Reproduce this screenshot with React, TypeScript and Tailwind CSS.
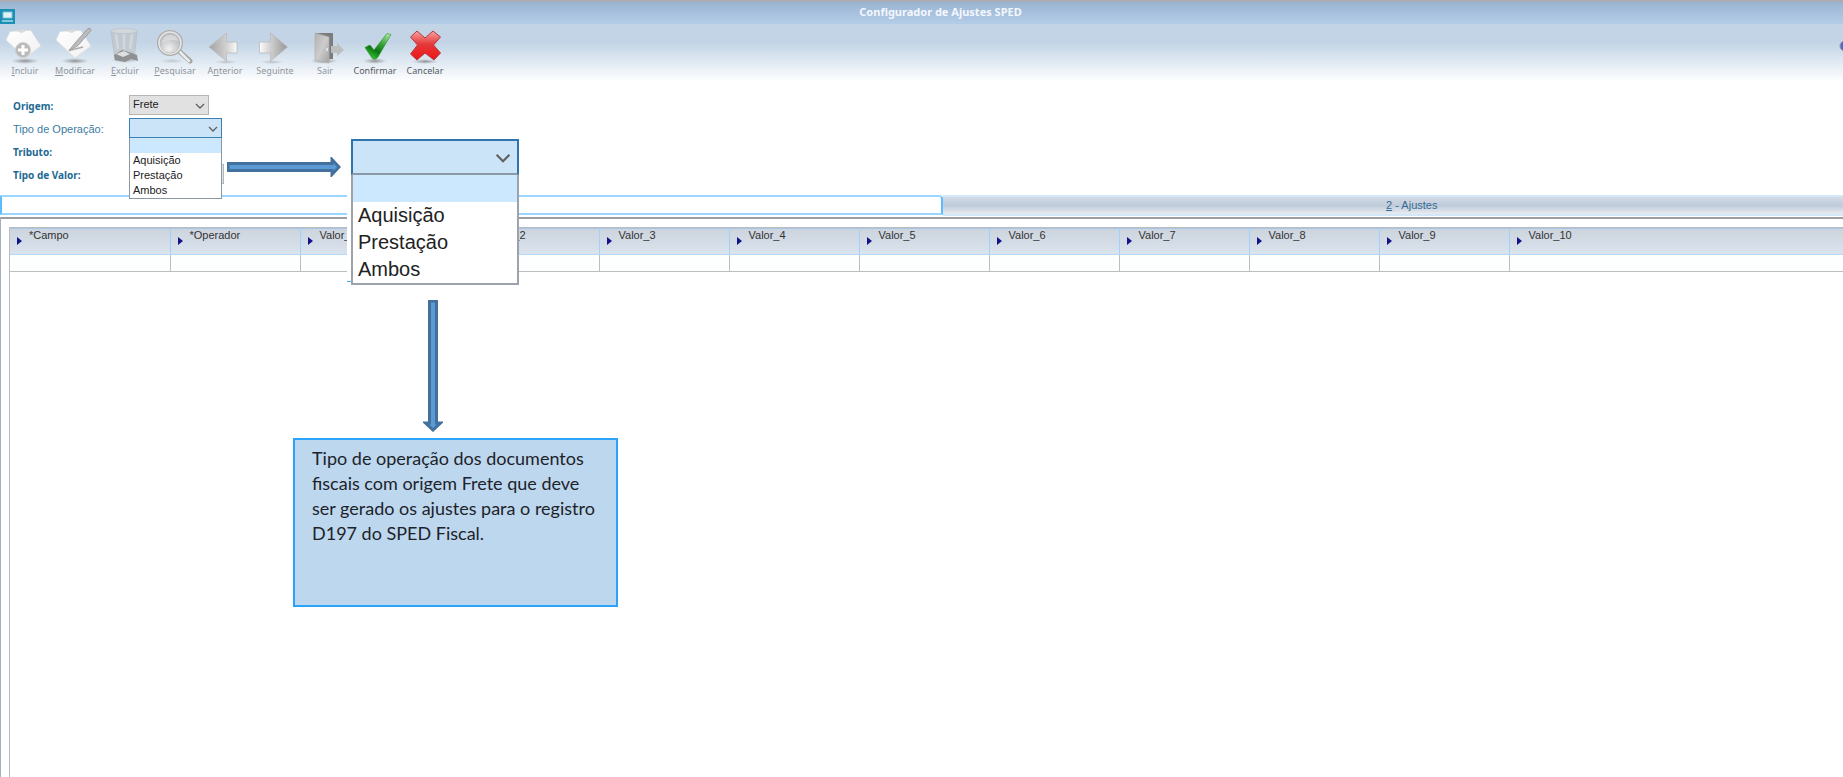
import type { ReactNode } from 'react'
import { clsx } from 'clsx'

const toolbar = [
  { name: 'Incluir', key: 0, enabled: false, icon: <AddIcon /> },
  { name: 'Modificar', key: 0, enabled: false, icon: <EditIcon /> },
  { name: 'Excluir', key: 0, enabled: false, icon: <TrashIcon /> },
  { name: 'Pesquisar', key: 0, enabled: false, icon: <SearchIcon /> },
  { name: 'Anterior', key: 1, enabled: false, icon: <PreviousIcon /> },
  { name: 'Seguinte', key: 2, enabled: false, icon: <NextIcon /> },
  { name: 'Sair', key: -1, enabled: false, icon: <ExitIcon /> },
  { name: 'Confirmar', key: -1, enabled: true, icon: <ConfirmIcon /> },
  { name: 'Cancelar', key: -1, enabled: true, icon: <CancelIcon /> },
]

const columns = [
  { name: '*Campo', width: 'w-[160px]' },
  { name: '*Operador', width: 'w-[130px]' },
  { name: 'Valor_1', width: 'w-[169px]' },
  { name: 'Valor_2', width: 'w-[130px]' },
  { name: 'Valor_3', width: 'w-[130px]' },
  { name: 'Valor_4', width: 'w-[130px]' },
  { name: 'Valor_5', width: 'w-[130px]' },
  { name: 'Valor_6', width: 'w-[130px]' },
  { name: 'Valor_7', width: 'w-[130px]' },
  { name: 'Valor_8', width: 'w-[130px]' },
  { name: 'Valor_9', width: 'w-[130px]' },
  { name: 'Valor_10', width: 'w-auto' },
]

const operations = ['Aquisição', 'Prestação', 'Ambos']

function Gradients() {
  return (
    <svg className="absolute w-0 h-0" aria-hidden="true">
      <defs>
        <linearGradient id="paper" x1="0" y1="0" x2="1" y2="1">
          <stop offset="0" stopColor="#ffffff" />
          <stop offset="1" stopColor="#f0f0f0" />
        </linearGradient>
        <linearGradient id="metal" x1="0" y1="0" x2="1" y2="0">
          <stop offset="0" stopColor="#a4a4a4" />
          <stop offset="0.6" stopColor="#cfcfcf" />
          <stop offset="1" stopColor="#fafafa" />
        </linearGradient>
        <linearGradient id="metalBack" x1="1" y1="0" x2="0" y2="0">
          <stop offset="0" stopColor="#979797" />
          <stop offset="0.6" stopColor="#cfcfcf" />
          <stop offset="1" stopColor="#fcfcfc" />
        </linearGradient>
        <linearGradient id="door" x1="0" y1="0" x2="1" y2="1">
          <stop offset="0" stopColor="#b2b2b2" />
          <stop offset="0.5" stopColor="#cccccc" />
          <stop offset="1" stopColor="#a2a2a2" />
        </linearGradient>
        <radialGradient id="shade">
          <stop offset="0" stopColor="#555" stopOpacity="0.6" />
          <stop offset="1" stopColor="#777" stopOpacity="0" />
        </radialGradient>
        <radialGradient id="lens" cx="0.45" cy="0.75">
          <stop offset="0" stopColor="#f2f2f2" />
          <stop offset="1" stopColor="#bcbfc3" />
        </radialGradient>
        <linearGradient id="green" x1="0.9" y1="0" x2="0.3" y2="1">
          <stop offset="0" stopColor="#a8e8a0" />
          <stop offset="0.4" stopColor="#3ba53b" />
          <stop offset="0.7" stopColor="#0c7612" />
          <stop offset="1" stopColor="#35c535" />
        </linearGradient>
        <linearGradient id="red" x1="0" y1="0" x2="0" y2="1">
          <stop offset="0" stopColor="#f9a3a3" />
          <stop offset="0.45" stopColor="#e43a3a" />
          <stop offset="1" stopColor="#f01414" />
        </linearGradient>
      </defs>
    </svg>
  )
}

function Icon({ children }: { children: ReactNode }) {
  return (
    <svg viewBox="0 0 40 38" className="w-10 h-[38px]" aria-hidden="true">
      {children}
    </svg>
  )
}

function Paper() {
  return (
    <>
      <ellipse cx="20" cy="35" rx="14" ry="3" fill="url(#shade)" />
      <path d="M5 5.5 L13 5 Q17 8 20 4.5 L26 4.5 L36 20 L20 32 L1 14 Z" fill="url(#paper)" stroke="#d9d9d9" strokeWidth="0.6" />
      <path d="M12 5 Q17 2 21 4.5 Q17 8 12 5 Z" fill="#dadada" />
    </>
  )
}

function AddIcon() {
  return (
    <Icon>
      <Paper />
      <circle cx="18" cy="24" r="7.5" fill="#b9b9b9" stroke="#cfcfcf" />
      <path d="M18 19v10M13 24h10" stroke="#fff" strokeWidth="3" />
    </Icon>
  )
}

function EditIcon() {
  return (
    <Icon>
      <Paper />
      <path d="M33 2.5 L20 17 L14 24.5 L23 19.5 L36 4.5 Q36 2 33 2.5 Z" fill="#bcbcbc" stroke="#8f8f8f" strokeWidth="0.8" />
      <path d="M14 24.5 L28 21" stroke="#aaa" strokeWidth="1.5" />
    </Icon>
  )
}

function TrashIcon() {
  return (
    <Icon>
      <ellipse cx="20" cy="34" rx="14" ry="3" fill="url(#shade)" opacity="0.6" />
      <path d="M6 5 H32 L29 34 Q20 36 10 34 Z" fill="#bfc4c9" fillOpacity="0.75" stroke="#b4b8bc" strokeWidth="0.6" />
      <path d="M11 8 L13 23M19 8 V23M27 8 L25 23" stroke="#d3d8dc" strokeWidth="2.5" />
      <path d="M9 29 L17 24 L27 27 L32 29 L33 35 L26 33 L20 36 L10 34 Z" fill="#8f9091" />
      <path d="M11 28 L19 25 L25 28 L18 31 Z" fill="#dedede" />
      <ellipse cx="19" cy="5" rx="13" ry="2.5" fill="#d2d7dc" stroke="#b9bec3" strokeWidth="0.5" />
    </Icon>
  )
}

function SearchIcon() {
  return (
    <Icon>
      <ellipse cx="17" cy="35" rx="12" ry="2.5" fill="url(#shade)" opacity="0.4" />
      <path d="M24 25 L35 35" stroke="#a4a4a4" strokeWidth="5" strokeLinecap="round" />
      <path d="M24 25 L34 35" stroke="#ececec" strokeWidth="2.5" strokeLinecap="round" />
      <circle cx="15" cy="17" r="11.5" fill="url(#lens)" stroke="#adadad" strokeWidth="3" />
      <circle cx="15" cy="17" r="11" fill="none" stroke="#e6e6e6" strokeWidth="1.5" />
      <path d="M7 17 Q8 9 15 9 Q22 9 23 15 Q15 12 7 17" fill="#e2e2e2" opacity="0.7" />
    </Icon>
  )
}

function PreviousIcon() {
  return (
    <Icon>
      <ellipse cx="21" cy="36" rx="12" ry="2" fill="url(#shade)" opacity="0.5" />
      <path d="M4 21 L21.5 7 V16 H32 V27 H21.5 V35 Z" fill="url(#metal)" stroke="#b9b9b9" strokeWidth="0.8" />
    </Icon>
  )
}

function NextIcon() {
  return (
    <Icon>
      <ellipse cx="17" cy="36" rx="12" ry="2" fill="url(#shade)" opacity="0.5" />
      <path d="M32.5 21 L15.5 7 V16 H4.5 V27 H15.5 V35 Z" fill="url(#metalBack)" stroke="#b9b9b9" strokeWidth="0.8" />
    </Icon>
  )
}

function ExitIcon() {
  return (
    <Icon>
      <ellipse cx="19" cy="35" rx="14" ry="3" fill="url(#shade)" />
      <path d="M10 7 H28 V33 H10 Z" fill="#7c7c7c" />
      <path d="M10 7 L24 11 V37 L10 34 Z" fill="url(#door)" stroke="#b0b0b0" strokeWidth="0.7" />
      <path d="M22 22v3" stroke="#eee" strokeWidth="1.5" />
      <path d="M26 20 H32 V17 L39 24 L32 30 V27 H26 Z" fill="#bcbec0" />
    </Icon>
  )
}

function ConfirmIcon() {
  return (
    <Icon>
      <ellipse cx="20" cy="35" rx="12" ry="3" fill="url(#shade)" />
      <path d="M10 21.5 L15 19 L19 24 L32 7.5 L36 8.5 L23 31 Q20 35 17 32 Z" fill="url(#green)" stroke="#2b8c2b" strokeWidth="0.6" />
    </Icon>
  )
}

function CancelIcon() {
  return (
    <Icon>
      <ellipse cx="20" cy="35.5" rx="13" ry="2.5" fill="url(#shade)" />
      <path
        d="M12 5 L20 12 L28 5 L35.5 11 L28.5 19 L35.5 27 L29 34 L20 27 L12 34 L5.5 28 L12.5 19 L5.5 11 Z"
        fill="url(#red)"
        stroke="#b33a44"
        strokeLinejoin="round"
      />
    </Icon>
  )
}

function Chevron({ className }: { className: string }) {
  return (
    <svg viewBox="0 0 10 6" className={clsx('absolute pointer-events-none', className)} aria-hidden="true">
      <path d="M1 1 L5 5 L9 1" fill="none" stroke="#606060" strokeWidth="1.3" />
    </svg>
  )
}

function ToolbarLabel({ name, index }: { name: string; index: number }) {
  if (index < 0) return <span>{name}</span>
  return (
    <span>
      {name.slice(0, index)}
      <u>{name[index]}</u>
      {name.slice(index + 1)}
    </span>
  )
}

function FormRow({ id, label, strong, children }: { id: string; label: string; strong?: boolean; children?: ReactNode }) {
  return (
    <div className="flex items-center h-[23px]">
      <label
        htmlFor={id}
        className={clsx(
          'w-[116px] shrink-0 pt-1',
          strong ? "font-['Noto_Sans',sans-serif] text-[10px] font-bold text-[#216a94]" : 'text-[11px] text-[#3d7ba3]'
        )}
      >
        {label}
      </label>
      {children}
    </div>
  )
}

function Header() {
  return (
    <header className="bg-linear-to-b from-[#c2d4e5] from-50% to-white border-t-2 border-[#a9adb3]">
      <div className="flex items-center h-[22px] bg-linear-to-b from-[#9ab3d1] to-[#b3cde9]">
        <h1 className="flex-1 text-center font-['Noto_Sans',sans-serif] text-[11px] font-bold text-[#f3f7fc] pb-0.5">
          Configurador de Ajustes SPED
        </h1>
      </div>
      <div className="flex items-start justify-between h-[58px]">
        <div className="flex">
          {toolbar.map((item) => (
            <button
              key={item.name}
              type="button"
              disabled={!item.enabled}
              className={clsx(
                "flex flex-col items-center w-[50px] pt-0.5 font-['Noto_Sans',sans-serif] text-[9px] leading-[14px]",
                item.enabled ? 'text-[#555b62]' : 'text-[#90959c]'
              )}
            >
              {item.icon}
              <ToolbarLabel name={item.name} index={item.key} />
            </button>
          ))}
        </div>
        <svg viewBox="0 0 12 12" className="w-3 h-3 mt-4 mr-[30px]" aria-hidden="true">
          <circle cx="6" cy="6" r="5" fill="#5069c4" stroke="#8d93b8" />
        </svg>
      </div>
    </header>
  )
}

function Filters() {
  return (
    <form className="pl-[13px] pt-[11px] pb-[10px]">
      <FormRow id="origem" label="Origem:" strong>
        <div className="relative">
          <select
            id="origem"
            className="block appearance-none w-20 h-5 pl-[3px] border border-[#b5b5b5] bg-[#e1e1e1] text-[11px] text-[#222]"
          >
            <option>Frete</option>
          </select>
          <Chevron className="w-[10px] h-[6px] right-1 top-2" />
        </div>
      </FormRow>
      <FormRow id="operacao" label="Tipo de Operação:">
        <div className="relative">
          <select
            id="operacao"
            className="block appearance-none w-[93px] h-5 border border-[#3c7fb1] bg-[#cce4f7] text-[11px]"
          >
            <option></option>
            {operations.map((name) => (
              <option key={name}>{name}</option>
            ))}
          </select>
          <Chevron className="w-[10px] h-[6px] right-1 top-2" />
          <ul className="absolute z-10 top-5 left-0 w-full border border-t-0 border-[#8a98a6] bg-white text-[11px] leading-[15px] text-[#222]">
            <li className="h-[15px] bg-[#cce8ff]" />
            {operations.map((name) => (
              <li key={name} className="pl-[3px]">{name}</li>
            ))}
          </ul>
        </div>
      </FormRow>
      <FormRow id="tributo" label="Tributo:" strong>
        <select id="tributo" className="appearance-none w-20 h-5" />
      </FormRow>
      <FormRow id="valor" label="Tipo de Valor:" strong>
        <select id="valor" className="appearance-none w-[95px] h-5 border border-[#b5b5b5] bg-[#e1e1e1]" />
      </FormRow>
    </form>
  )
}

function Tabs() {
  return (
    <div role="tablist" className="flex h-[22px]">
      <button
        type="button"
        role="tab"
        aria-selected="true"
        aria-label="1"
        className="flex-1 h-5 bg-white border-2 border-[#9ad6ff] border-r-[#5bbcff] border-l-[#5bbcff] rounded-tr"
      />
      <button
        type="button"
        role="tab"
        aria-selected="false"
        className="flex-1 h-[21px] border-y-2 border-[#d3e7fb] bg-linear-to-b from-[#d3dbe5] via-[#bfcbda] to-[#e9ecf1] text-[11px] text-[#336a92]"
      >
        <u>2</u> - Ajustes
      </button>
    </div>
  )
}

function Grid() {
  return (
    <div className="flex-1 flex flex-col pt-2 pl-2 border-t-2 border-l border-t-[#9c9da1] border-l-[#a3b0bf]">
      <div className="flex-1 border-l border-t border-[#b9bcc0]">
        <table className="w-full table-fixed border-collapse text-[11px]">
          <thead>
            <tr className="h-[26px] bg-linear-to-b from-[#ccd4de] to-[#dbe4ee]">
              {columns.map((column) => (
                <th
                  key={column.name}
                  className={clsx(
                    'p-0 border-y border-r border-t-[#a9c6ea] border-b-[#b4daff] border-r-[#9fd0ff] font-normal text-left align-top text-[#333]',
                    column.width
                  )}
                >
                  <div className="flex items-start pl-[7px]">
                    <svg viewBox="0 0 5 8" className="w-[5px] h-2 mt-2 mr-[7px]" aria-hidden="true">
                      <path d="M0 0 L5 4 L0 8 Z" fill="#12128a" />
                    </svg>
                    <span className="leading-3">{column.name}</span>
                  </div>
                </th>
              ))}
            </tr>
          </thead>
          <tbody>
            <tr className="h-[17px]">
              {columns.map((column) => (
                <td key={column.name} className="p-0 border-b border-r border-[#bdbdbd] bg-[#fdfefe]" />
              ))}
            </tr>
          </tbody>
        </table>
      </div>
    </div>
  )
}

// Enlarged copy of the open list, with the arrows and the note that explain it
function Annotations() {
  return (
    <>
      <svg viewBox="0 0 114 20" className="absolute z-20 left-[227px] top-[157px] w-[114px] h-5" aria-hidden="true">
        <path d="M1 6.5 H105 V2.5 L112 10 L105 17.5 V13.5 H1 Z" fill="#5b9bd5" stroke="#41719c" strokeWidth="3" />
      </svg>
      <div className="absolute z-20 left-[347px] top-[139px] pl-1 bg-white">
        <div className="w-[168px]">
          <div className="relative">
            <select
              aria-label="Tipo de Operação"
              className="block appearance-none w-full h-9 border-2 border-b-[#8b98a6] border-[#2e75b0] bg-[#cce4f7] text-[20px]"
            >
              <option></option>
              {operations.map((name) => (
                <option key={name}>{name}</option>
              ))}
            </select>
            <Chevron className="w-4 h-[10px] right-2 top-[14px]" />
          </div>
          <ul className="border-2 border-t-0 border-[#9da3ad] bg-white text-[20px] leading-[27px] text-[#222]">
            <li className="h-[27px] bg-[#cce8ff]" />
            {operations.map((name) => (
              <li key={name} className="pl-[5px]">{name}</li>
            ))}
          </ul>
        </div>
        <div className="absolute left-0 bottom-[3px] w-1 h-px bg-[#3fb2f5]" />
      </div>
      <svg viewBox="0 0 20 132" className="absolute z-20 left-[423px] top-[300px] w-5 h-[132px]" aria-hidden="true">
        <path d="M6.5 1 V123 H2.5 L10 130 L17.5 123 H13.5 V1 Z" fill="#5b9bd5" stroke="#41719c" strokeWidth="3" />
      </svg>
      <p className="absolute z-20 left-[293px] top-[438px] w-[325px] h-[169px] pl-[17px] pr-4 pt-1.5 border-2 border-[#2ba3fb] bg-[#bdd7ee] font-['Lato',sans-serif] text-[18px] leading-[25px] text-[#1d232a]">
        Tipo de operação dos documentos fiscais com origem Frete que deve ser gerado os ajustes para o registro D197 do SPED Fiscal.
      </p>
    </>
  )
}

export default function App() {
  return (
    <div className="relative overflow-hidden min-h-screen flex flex-col bg-white font-['Liberation_Sans',Arial,sans-serif]">
      <Gradients />
      {/* the form runs a little past the right edge of the window */}
      <div className="flex-1 flex flex-col -mr-[38px]">
        <Header />
        <Filters />
        <Tabs />
        <Grid />
      </div>
      <svg viewBox="0 0 15 15" className="absolute left-0 top-[9px] w-[15px] h-[15px]" aria-hidden="true">
        <path d="M0 0 H15 V15 H0 Z" fill="#1c8fb4" />
        <path d="M3 3 H12 V9 H3 Z" fill="#e2f3f8" stroke="#7cc4da" />
        <path d="M2 12 H13" stroke="#a8dcea" strokeWidth="1.5" />
      </svg>
      <Annotations />
    </div>
  )
}
